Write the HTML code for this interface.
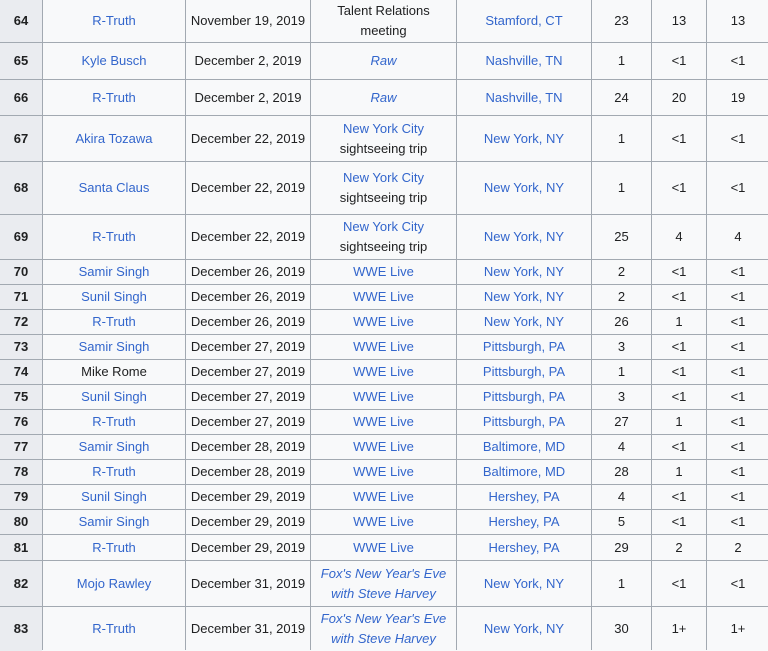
<!DOCTYPE html><html><head><meta charset="utf-8"><style>
body{margin:0;width:768px;height:650px;overflow:hidden;background:#f8f9fa;font-family:"Liberation Sans",Arial,sans-serif;font-size:13px;color:#202122;position:relative}
.c{position:absolute;display:flex;align-items:center;justify-content:center;text-align:center;line-height:20px}
.h{position:absolute;left:0;width:768px;height:1px;background:#a2a9b1}
.v{position:absolute;top:0;height:650px;width:1px;background:#a2a9b1}
.n{background:#eaecf0;font-weight:bold}
a{color:#3366cc;text-decoration:none}
</style></head><body>
<div id="t"></div>
<script>
var ys=[-1,42,79,115,161,214,259,284,309,334,359,384,409,434,459,484,509,534,560,606,651];
var xs=[0,42,185,310,456,591,651,706,769];
var rows=[
["64","R-Truth","November 19, 2019","Talent Relations<br>meeting","Stamford, CT","23","13","13"],
["65","Kyle Busch","December 2, 2019","<i><a>Raw</a></i>","Nashville, TN","1","&lt;1","&lt;1"],
["66","R-Truth","December 2, 2019","<i><a>Raw</a></i>","Nashville, TN","24","20","19"],
["67","Akira Tozawa","December 22, 2019","<a>New York City</a><br>sightseeing trip","New York, NY","1","&lt;1","&lt;1"],
["68","Santa Claus","December 22, 2019","<a>New York City</a><br>sightseeing trip","New York, NY","1","&lt;1","&lt;1"],
["69","R-Truth","December 22, 2019","<a>New York City</a><br>sightseeing trip","New York, NY","25","4","4"],
["70","Samir Singh","December 26, 2019","<a>WWE Live</a>","New York, NY","2","&lt;1","&lt;1"],
["71","Sunil Singh","December 26, 2019","<a>WWE Live</a>","New York, NY","2","&lt;1","&lt;1"],
["72","R-Truth","December 26, 2019","<a>WWE Live</a>","New York, NY","26","1","&lt;1"],
["73","Samir Singh","December 27, 2019","<a>WWE Live</a>","Pittsburgh, PA","3","&lt;1","&lt;1"],
["74","Mike Rome","December 27, 2019","<a>WWE Live</a>","Pittsburgh, PA","1","&lt;1","&lt;1",1],
["75","Sunil Singh","December 27, 2019","<a>WWE Live</a>","Pittsburgh, PA","3","&lt;1","&lt;1"],
["76","R-Truth","December 27, 2019","<a>WWE Live</a>","Pittsburgh, PA","27","1","&lt;1"],
["77","Samir Singh","December 28, 2019","<a>WWE Live</a>","Baltimore, MD","4","&lt;1","&lt;1"],
["78","R-Truth","December 28, 2019","<a>WWE Live</a>","Baltimore, MD","28","1","&lt;1"],
["79","Sunil Singh","December 29, 2019","<a>WWE Live</a>","Hershey, PA","4","&lt;1","&lt;1"],
["80","Samir Singh","December 29, 2019","<a>WWE Live</a>","Hershey, PA","5","&lt;1","&lt;1"],
["81","R-Truth","December 29, 2019","<a>WWE Live</a>","Hershey, PA","29","2","2"],
["82","Mojo Rawley","December 31, 2019","<i><a>Fox's New Year's Eve</a><br><a>with Steve Harvey</a></i>","New York, NY","1","&lt;1","&lt;1"],
["83","R-Truth","December 31, 2019","<i><a>Fox's New Year's Eve</a><br><a>with Steve Harvey</a></i>","New York, NY","30","1+","1+"]
];
var h='';
rows.forEach(function(r,i){
 var y0=ys[i]+1,y1=ys[i+1];
 for(var j=0;j<8;j++){
  var x0=xs[j]+(j?1:0),x1=xs[j+1];
  var txt=r[j];
  if(j==1&&!r[8])txt='<a>'+txt+'</a>';
  if(j==4)txt='<a>'+txt+'</a>';
  h+='<div class="c'+(j==0?' n':'')+'" style="left:'+x0+'px;top:'+y0+'px;width:'+(x1-x0)+'px;height:'+(y1-y0)+'px"><span>'+txt+'</span></div>';
 }
});
ys.forEach(function(y){if(y>=0&&y<650)h+='<div class="h" style="top:'+y+'px"></div>';});
xs.forEach(function(x){if(x>0&&x<768)h+='<div class="v" style="left:'+x+'px"></div>';});
document.getElementById('t').innerHTML=h;
</script>
</body></html>
